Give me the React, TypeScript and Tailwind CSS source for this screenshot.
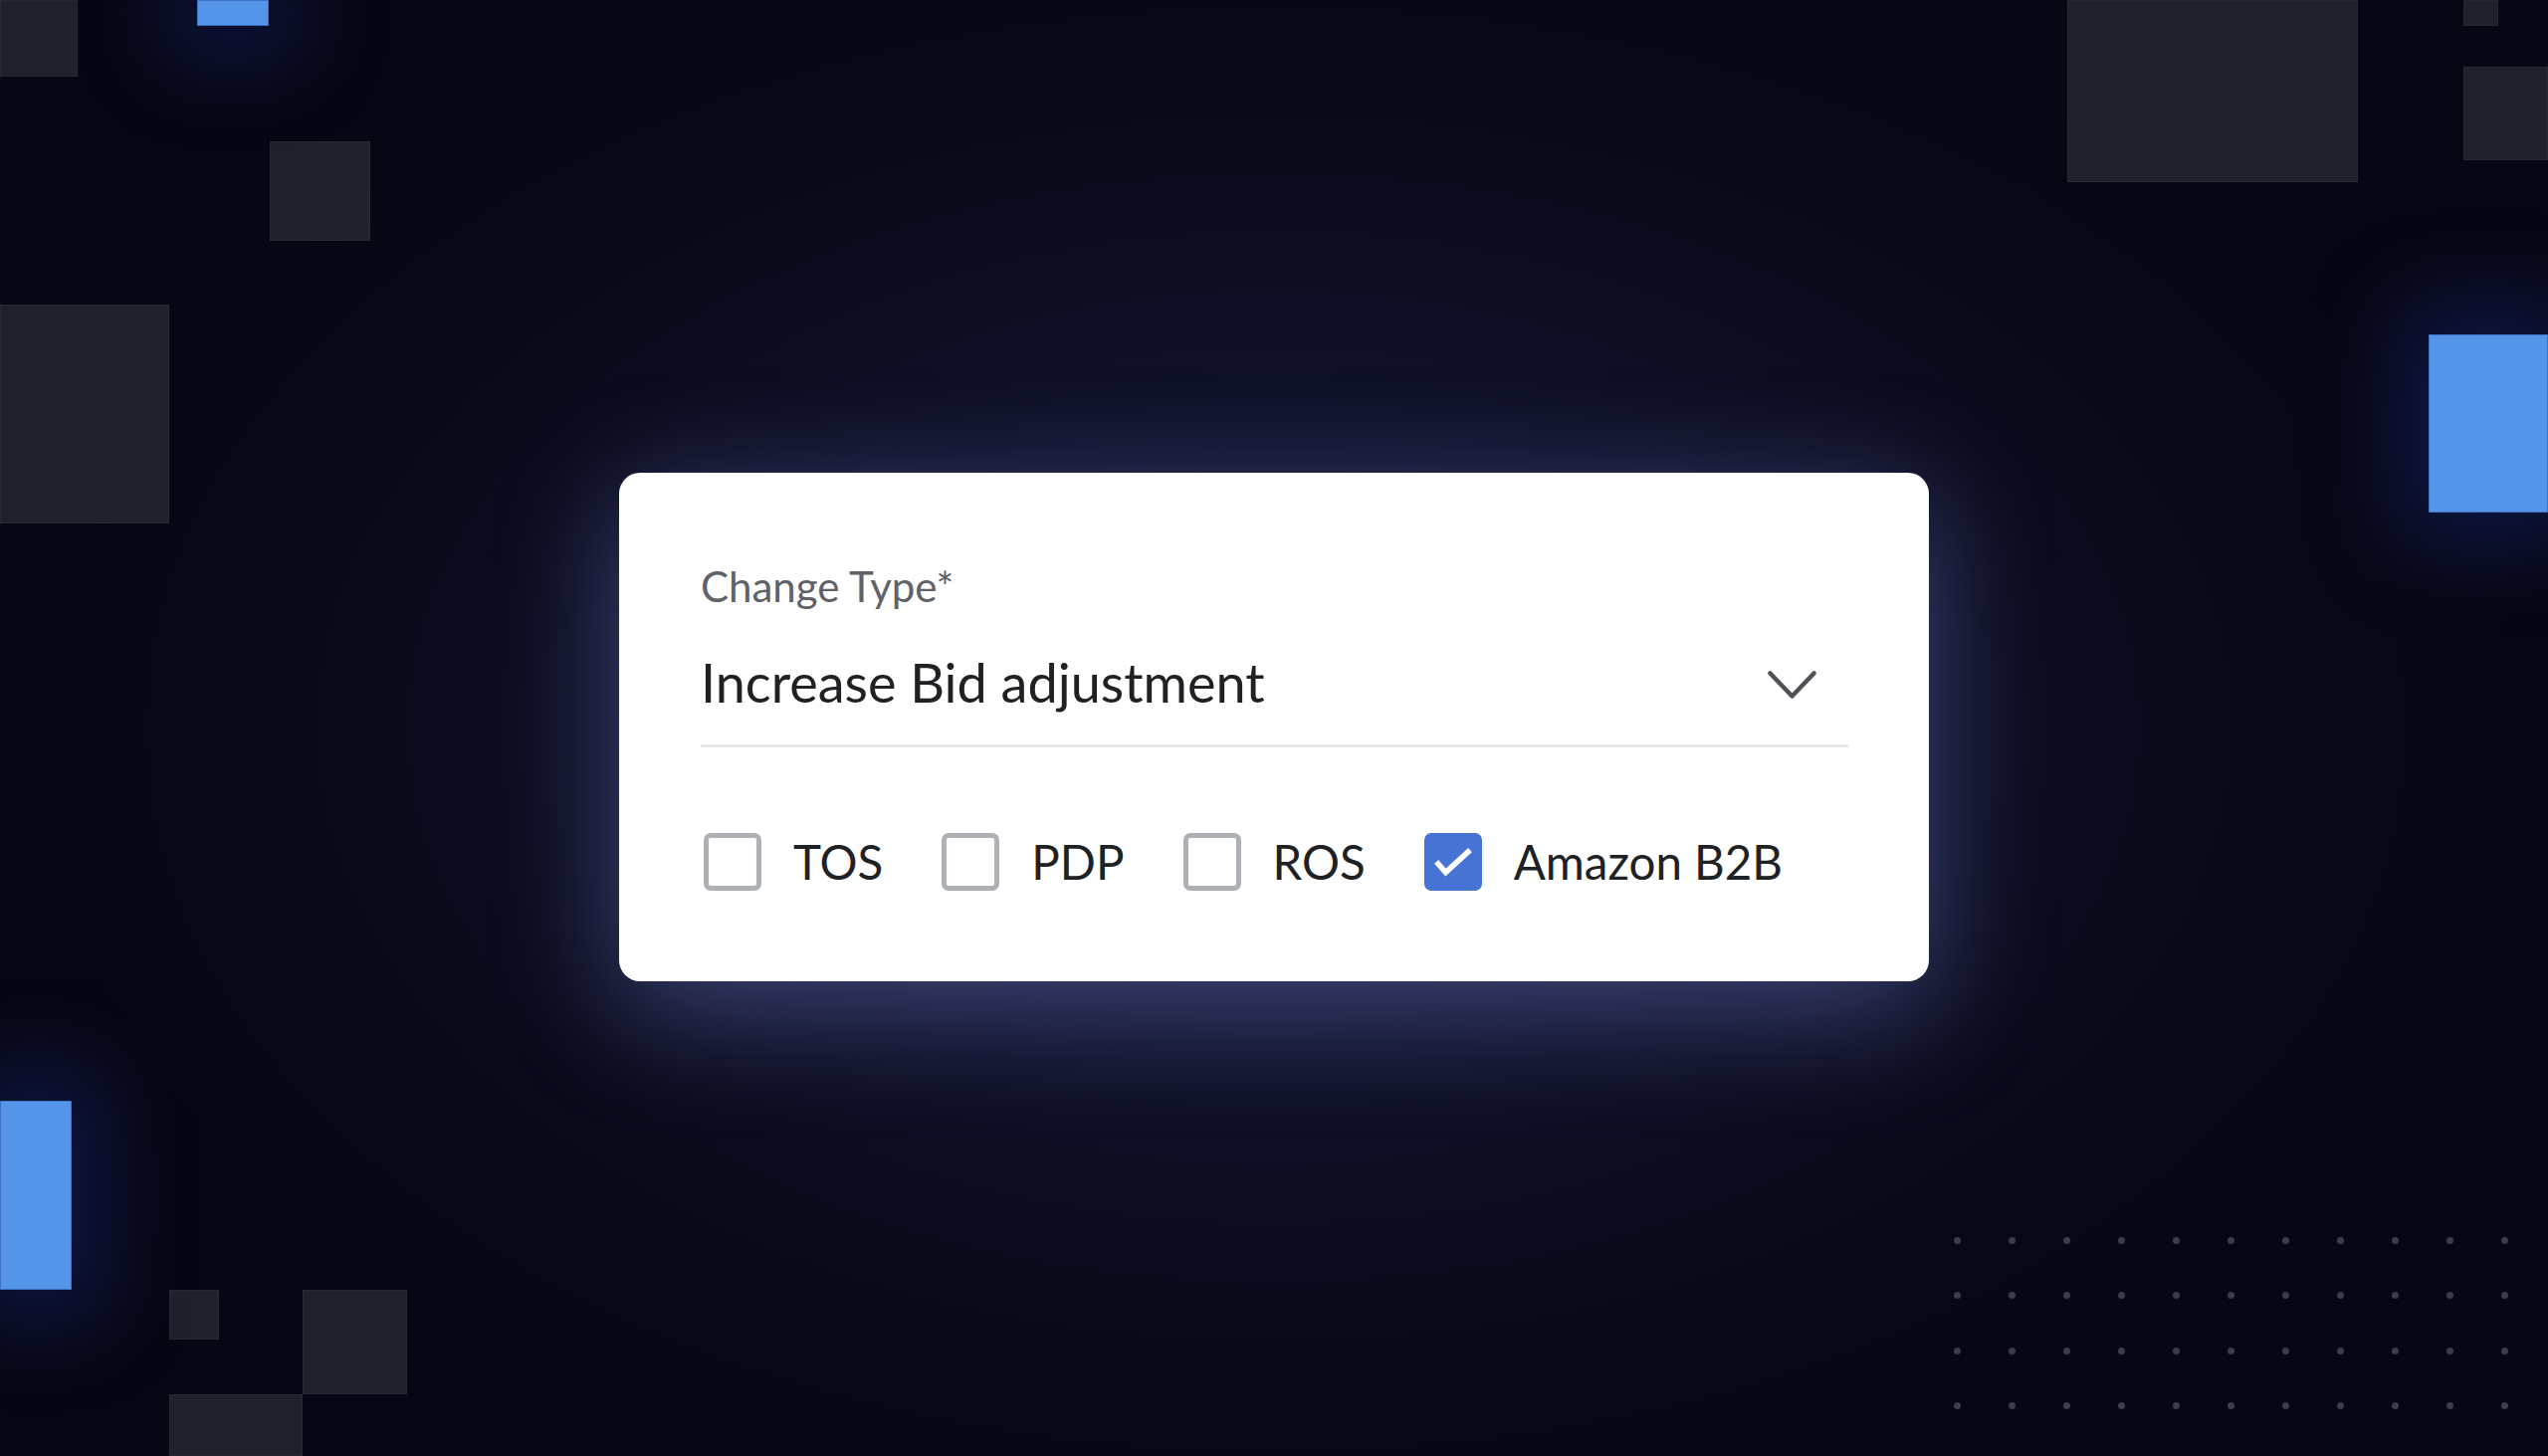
import React, { useState } from 'react';

const FONT = { fontFamily: 'Lato, "Noto Sans", sans-serif' };

const OPTIONS = [
  { id: 'tos', label: 'TOS' },
  { id: 'pdp', label: 'PDP' },
  { id: 'ros', label: 'ROS' },
  { id: 'b2b', label: 'Amazon B2B' },
];

// Background tiles, placed on the canvas by coordinate
const tiles = [
  { cls: 'left-0 top-0 w-[78px] h-[77px] bg-[#21212d]' },
  { cls: 'left-[271px] top-[142px] w-[101px] h-[100px] bg-[#21212d]' },
  { cls: 'left-0 top-[306px] w-[170px] h-[220px] bg-[#21212d]' },
  { cls: 'left-[2077px] top-0 w-[292px] h-[183px] bg-[#21212d]' },
  { cls: 'left-[2475px] top-0 w-[35px] h-[26px] bg-[#21212d]' },
  { cls: 'left-[2475px] top-[67px] w-[85px] h-[94px] bg-[#21212d]' },
  { cls: 'left-[170px] top-[1296px] w-[50px] h-[50px] bg-[#21212d]' },
  { cls: 'left-[304px] top-[1296px] w-[105px] h-[105px] bg-[#21212d]' },
  { cls: 'left-[170px] top-[1401px] w-[134px] h-[62px] bg-[#21212d]' },
];

const glowTiles = [
  { cls: 'left-[198px] top-0 w-[72px] h-[26px]' },
  { cls: 'left-[2440px] top-[336px] w-[120px] h-[179px]' },
  { cls: 'left-0 top-[1106px] w-[72px] h-[190px]' },
];

const Checkbox: React.FC<{ checked: boolean; onToggle: () => void; label: string }> = ({ checked, onToggle, label }) => (
  <button onClick={onToggle} className="flex items-center gap-[32px] text-left">
    {checked ? (
      <span className="w-[58px] h-[58px] rounded-[7px] bg-[#4673d4] flex items-center justify-center">
        <svg width="58" height="58" viewBox="0 0 58 58" fill="none">
          <polyline points="14,31 21.5,39.5 44,19" stroke="white" strokeWidth="5.5" strokeLinecap="square" strokeLinejoin="miter" />
        </svg>
      </span>
    ) : (
      <span className="w-[58px] h-[58px] rounded-[7px] border-[5px] border-[#adb0b5] bg-white" />
    )}
    <span className="text-[47.5px] leading-none text-[#202124]">{label}</span>
  </button>
);

export default function App() {
  const [checked, setChecked] = useState<Record<string, boolean>>({ b2b: true });

  return (
    <div
      style={FONT}
      className="relative w-[2560px] h-[1463px] overflow-hidden bg-[#070614] bg-[radial-gradient(ellipse_1250px_800px_at_50%_50%,#171b3b_0%,#0f1128_45%,#090818_80%,#070614_100%)]"
    >
      {/* decorative tiles */}
      {tiles.map((t, i) => (
        <div key={i} className={`absolute border border-[#282836] ${t.cls}`} />
      ))}
      {glowTiles.map((t, i) => (
        <div
          key={i}
          className={`absolute bg-[#5495e9] border border-[#3f72c0] shadow-[0_0_90px_30px_rgba(30,60,160,0.35)] ${t.cls}`}
        />
      ))}

      {/* dot grid */}
      <div className="absolute left-[1963px] top-[1243px] grid grid-cols-11 gap-x-[48px] gap-y-[48.3px]">
        {Array.from({ length: 44 }).map((_, i) => (
          <span key={i} className="w-[7px] h-[7px] rounded-full bg-[#3c3c4b]" />
        ))}
      </div>

      {/* form card */}
      <div className="absolute left-[622px] top-[475px] w-[1316px] h-[511px] rounded-[21px] bg-white pl-[82px] pr-[81px] pt-[93px] shadow-[0_28px_120px_rgba(120,135,215,0.45)]">
        <div className="text-[42px] leading-none text-[#5f6268]">Change Type*</div>

        <div className="mt-[49px] flex items-center justify-between">
          <div className="text-[54px] leading-none text-[#202124]">Increase Bid adjustment</div>
          <svg width="49" height="28" viewBox="0 0 49 28" fill="none" className="mr-[32px] mt-[4px]">
            <path d="M2.5 2.5 L24.5 25.5 L46.5 2.5" stroke="#4f5258" strokeWidth="4.5" strokeLinecap="round" strokeLinejoin="round" />
          </svg>
        </div>
        <div className="mt-[35px] h-[3px] bg-[#e6e7ea]" />

        <div className="mt-[86px] ml-[3px] flex items-center gap-[59px]">
          {OPTIONS.map((o) => (
            <Checkbox
              key={o.id}
              label={o.label}
              checked={!!checked[o.id]}
              onToggle={() => setChecked((c) => ({ ...c, [o.id]: !c[o.id] }))}
            />
          ))}
        </div>
      </div>
    </div>
  );
}
